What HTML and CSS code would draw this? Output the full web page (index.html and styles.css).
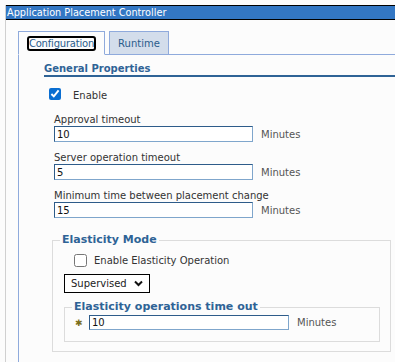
FILE: index.html
```html
<!DOCTYPE html>
<html lang="en">
<head>
  <meta charset="UTF-8">
  <title>Application Placement Controller</title>
  <link rel="stylesheet" href="styles.css">
</head>
<body>
  <div class="portlet">
    <div class="title-bar">Application Placement Controller</div>
    <div class="tabs">
      <a href="#" class="tab active"><span class="focus">Configuration</span></a>
      <a href="#" class="tab">Runtime</a>
    </div>
    <div class="panel">
      <h2 class="section-title">General Properties</h2>
      <label class="check-row">
        <input type="checkbox" class="check checked" checked>
        <span class="check-text">Enable</span>
      </label>
      <div class="field">
        <div class="label">Approval timeout</div>
        <div class="input-row"><input type="text" class="text-input" value="10"><span class="unit">Minutes</span></div>
      </div>
      <div class="field">
        <div class="label">Server operation timeout</div>
        <div class="input-row"><input type="text" class="text-input" value="5"><span class="unit">Minutes</span></div>
      </div>
      <div class="field">
        <div class="label">Minimum time between placement change</div>
        <div class="input-row"><input type="text" class="text-input" value="15"><span class="unit">Minutes</span></div>
      </div>
      <fieldset class="group">
        <legend>Elasticity Mode</legend>
        <label class="check-row sub">
          <input type="checkbox" class="check">
          <span>Enable Elasticity Operation</span>
        </label>
        <div class="select">Supervised
          <svg width="9" height="7" viewBox="0 0 9 7"><path d="M1 1.5 L4.5 5 L8 1.5" fill="none" stroke="#111" stroke-width="2"/></svg>
        </div>
        <fieldset class="group inner">
          <legend>Elasticity operations time out</legend>
          <div class="input-row">
            <span class="req">&#10033;</span>
            <input type="text" class="text-input" value="10"><span class="unit">Minutes</span>
          </div>
        </fieldset>
      </fieldset>
    </div>
  </div>
</body>
</html>
```
FILE: styles.css
```css
body {
  margin: 0;
  background: #fcfcfc;
  font-family: 'DejaVu Sans', Verdana, sans-serif;
  font-size: 10px;
  color: #333;
}
.portlet {
  margin: 5px 0 0 5px;
  border-left: 1px solid #d0d0d0;
  height: 357px;
}
.title-bar {
  background: #3377c4;
  color: #fff;
  border-top: 1px solid #000;
  border-bottom: 1px solid #000;
  height: 13px;
  line-height: 13px;
  padding-left: 1px;
  font-family: 'DejaVu Sans Condensed', 'DejaVu Sans', sans-serif;
  font-size: 10.8px;
  white-space: nowrap;
}
.tabs {
  display: flex;
  align-items: flex-end;
  gap: 4px;
  margin: 11px 0 0 12px;
  border-bottom: 1px solid #8faadc;
}
.tab {
  display: flex;
  align-items: center;
  justify-content: center;
  height: 22px;
  margin-bottom: -1px;
  border: 1px solid #8faadc;
  background: #d3ddeb;
  color: #2a5c8c;
  text-decoration: none;
}
.tab.active {
  background: #fcfcfc;
  border-bottom-color: #fcfcfc;
  width: 85px;
}
.tab:not(.active) {
  width: 58px;
}
.focus {
  border: 2px solid #000;
  border-radius: 3px;
  padding: 0;
  line-height: 11px;
  letter-spacing: -0.2px;
}
.panel {
  margin-left: 12px;
  border-left: 1px solid #8faadc;
  padding: 8px 0 0 25px;
  height: 300px;
}
.section-title {
  margin: 0;
  font-size: 10px;
  color: #2f6396;
  border-bottom: 2px solid #2f6396;
  line-height: 12px;
}
.check-row {
  display: flex;
  align-items: center;
  gap: 12px;
  margin: 11px 0 0 5px;
  line-height: 12px;
}
.check-text {
  position: relative;
  top: 2px;
}
.check {
  margin: 0;
  width: 12px;
  height: 12px;
}
.checked {
  accent-color: #0a6ed1;
}
.field {
  margin: 14px 0 0 10px;
}
.field + .field {
  margin-top: 10px;
}
.label {
  line-height: 12px;
}
.input-row {
  display: flex;
  align-items: center;
  gap: 8px;
}
.text-input {
  box-sizing: border-box;
  width: 199px;
  height: 16px;
  margin: 0;
  padding: 0 2px;
  border: 1px solid #7fa6cc;
  border-top-color: #2e5c8a;
  border-left-color: #2e5c8a;
  background: #fff;
  font: inherit;
  font-size: 10px;
  color: #111;
}
.unit {
  color: #555;
}
.group {
  margin: 15px 4px 0 8px;
  border: 1px solid #dcdcdc;
  padding: 0 10px 9px 11px;
}
.group legend {
  font-size: 11px;
  line-height: 14px;
  font-weight: bold;
  color: #2f6396;
  padding: 0 2px;
  margin-left: -4px;
}
.check-row.sub {
  margin: 7px 0 0 10px;
  gap: 7px;
}
.check-row.sub .check {
  width: 13px;
  height: 13px;
}
.select {
  display: inline-flex;
  align-items: center;
  gap: 7px;
  margin-top: 7px;
  height: 17px;
  padding: 0 6px 0 6px;
  border: 1px solid #000;
  background: #fff;
  color: #222;
}
.group.inner {
  margin: 7px 0 0 0;
  padding: 1px 10px 11px 10px;
}
.group.inner legend {
  margin-left: -3px;
}
.req {
  color: #7b6e1a;
  font-size: 9px;
  width: 8px;
  margin-right: -2px;
}
.inner .text-input {
  width: 200px;
  height: 15px;
}
```
